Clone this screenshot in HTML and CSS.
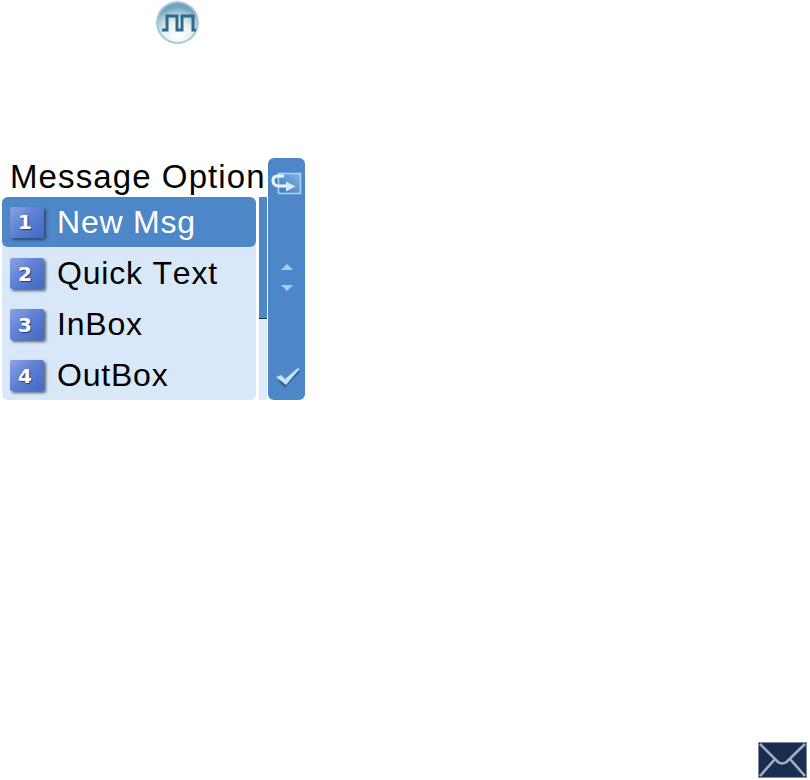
FILE: index.html

```html
<!DOCTYPE html>
<html lang="en">
<head>
  <meta charset="UTF-8" />
  <title>Message Option</title>
  <link rel="stylesheet" href="styles.css">
</head>
<body>
  <div class="status">
    <svg class="status-icon" width="44" height="46" viewBox="0 0 44 46">
      <defs>
        <radialGradient id="orb" cx="50%" cy="85%" r="75%">
          <stop offset="0" stop-color="#ffffff" />
          <stop offset="0.5" stop-color="#e6f1f2" />
          <stop offset="0.8" stop-color="#a4cad6" />
          <stop offset="1" stop-color="#6ea4bd" />
        </radialGradient>
      </defs>
      <circle cx="21.5" cy="22.5" r="21.5" fill="#a9c9d6" />
      <circle cx="21.5" cy="22.5" r="19.5" fill="url(#orb)" />
      <path d="M6 30h5V16h10v14h5V16h11v14h3" fill="none" stroke="#33688a" stroke-width="3" />
    </svg>
  </div>

  <div class="panel">
    <div class="menu">
      <div class="title">Message Option</div>
      <div class="menu-body">
        <ul class="list">
          <li class="item selected"><span class="badge">1</span>New Msg</li>
          <li class="item"><span class="badge">2</span>Quick Text</li>
          <li class="item"><span class="badge">3</span>InBox</li>
          <li class="item"><span class="badge">4</span>OutBox</li>
        </ul>
        <div class="scrollbar"><div class="thumb"></div></div>
      </div>
    </div>

    <div class="softkeys">
      <svg width="32" height="26" viewBox="0 0 32 26">
        <defs>
          <linearGradient id="backFill" x1="0" y1="1" x2="1" y2="0">
            <stop offset="0" stop-color="#3f78ba" />
            <stop offset="1" stop-color="#7fb5e6" />
          </linearGradient>
        </defs>
        <rect x="7.5" y="4.500" width="22" height="20" fill="url(#backFill)" stroke="#a9d2f4" stroke-width="1.6" />
        <path d="M13 7H6.500Q2 7 2 11.500T6.500 17H16" fill="none" stroke="#eaf5ff" stroke-width="3" />
        <path d="M15 12.500l9.500 5-9.500 5z" fill="#d4ebff" />
      </svg>
      <div class="arrows">
        <span class="arrow-up"></span>
        <span class="arrow-down"></span>
      </div>
      <svg width="26" height="20" viewBox="0 0 26 20">
        <path d="M4 11l7 7L26 2l-1-1L11 14l-5-4z" fill="#2f5a8a" transform="translate(0 1.5)" />
        <path d="M2 9l5-2 4 4L24 0l1.5 1L12 17z" fill="#c4e3fb" />
      </svg>
    </div>
  </div>

  <div class="footer">
    <svg width="49" height="36" viewBox="0 0 49 36">
      <rect x="0.5" y="0.5" width="48" height="35" fill="#1a2c50" stroke="#7c8ba2" stroke-width="1" />
      <path d="M2 2l18 18q4 3 8.500 0L47 2M2 34l15-17M47 34L32 17" fill="none" stroke="#a3b0bf" stroke-width="2.6" />
    </svg>
  </div>
</body>
</html>
```

FILE: styles.css

```css
html, body {
  margin: 0;
  padding: 0;
}
body {
  width: 810px;
  height: 780px;
  background: #fff;
  font-family: "Liberation Sans", Arial, sans-serif;
  font-kerning: none;
  display: flex;
  flex-direction: column;
  overflow: hidden;
}
.status {
  height: 46px;
  padding-left: 156px;
}
.status-icon {
  display: block;
}
.panel {
  display: flex;
  width: 303px;
  height: 242px;
  margin: 112px 0 0 2px;
}
.menu {
  width: 266px;
  display: flex;
  flex-direction: column;
}
.title {
  height: 39px;
  line-height: 38px;
  font-size: 33px;
  padding-left: 8px;
  letter-spacing: 1.1px;
  color: #000;
  white-space: nowrap;
}
.menu-body {
  display: flex;
  flex: 1;
}
.list {
  list-style: none;
  margin: 0;
  padding: 0;
  width: 254px;
  height: 203px;
  background: #d8e8f8;
  border-radius: 6px;
}
.item {
  display: flex;
  align-items: center;
  height: 51px;
  padding-left: 8px;
  font-size: 32px;
  letter-spacing: 0.8px;
  color: #000;
}
.item.selected {
  height: 50px;
  margin-bottom: 1px;
  background: #4d87c7;
  color: #fff;
  border-radius: 6px;
}
.badge {
  width: 30px;
  height: 31px;
  margin-right: 13px;
  padding-right: 4px;
  flex: none;
  display: flex;
  align-items: center;
  justify-content: center;
  font-family: "DejaVu Sans", sans-serif;
  font-size: 20px;
  font-weight: bold;
  letter-spacing: 0;
  color: #fff;
  text-shadow: 1px 1px 1px #24407f;
  background: linear-gradient(135deg, #8ba3e6 0%, #5a7ed2 50%, #4169c4 100%);
  border-radius: 2px;
  box-shadow: 2px 2px 3px rgba(30, 45, 80, 0.7);
}
.scrollbar {
  width: 8px;
  margin-left: 3px;
  background: #dfebf8;
}
.thumb {
  height: 122px;
  background: #4d87c7;
  border-bottom: 1px solid #1d3557;
  box-sizing: border-box;
}
.softkeys {
  width: 37px;
  margin-left: 1px;
  background: #4d87c7;
  border-radius: 6px;
  display: flex;
  flex-direction: column;
  align-items: center;
  padding: 11px 0 12px;
  box-sizing: border-box;
  justify-content: space-between;
}
.arrows {
  display: flex;
  flex-direction: column;
  gap: 15px;
  margin-bottom: 9px;
}
.arrow-up, .arrow-down {
  width: 0;
  height: 0;
  border-left: 6px solid transparent;
  border-right: 6px solid transparent;
}
.arrow-up {
  border-bottom: 6px solid #a9cbee;
}
.arrow-down {
  border-top: 6px solid #a9cbee;
}
.footer {
  margin-top: auto;
  padding: 0 3px 2px 0;
  display: flex;
  justify-content: flex-end;
}
.footer svg {
  display: block;
}
```
